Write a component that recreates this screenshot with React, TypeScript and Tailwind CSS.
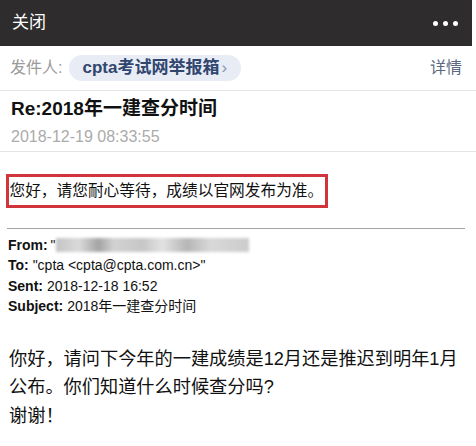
import React from "react";

const FONT = { fontFamily: '"Liberation Sans", "Noto Sans CJK SC", sans-serif' };

/* Header fields of the quoted message */
function QuoteLine({ label, children }: { label: string; children: React.ReactNode }) {
    return (
        <div className="leading-[20.4px] text-[14px] text-[#111] whitespace-nowrap">
            <span className="font-bold">{label}</span> {children}
        </div>
    );
}

export default function App() {
    return (
        <div className="w-[476px] h-[446px] bg-white overflow-hidden" style={FONT}>
            {/* Title bar */}
            <div className="h-[46px] w-[472px] bg-[#2e2c2d] flex items-center justify-between pl-[12px] pr-[14px]">
                <span className="text-white text-[17px]">关闭</span>
                <div className="flex gap-[5px]">
                    <span className="w-[5px] h-[5px] rounded-full bg-white" />
                    <span className="w-[5px] h-[5px] rounded-full bg-white" />
                    <span className="w-[5px] h-[5px] rounded-full bg-white" />
                </div>
            </div>

            {/* Sender row */}
            <div className="h-[45px] flex items-center justify-between pl-[10px] pr-[14px] border-b border-[#e4e4e4]">
                <div className="flex items-center">
                    <span className="text-[16px] text-[#9a9a9a]">发件人:</span>
                    <span className="ml-[7px] h-[26px] rounded-full bg-[#e8ecf4] text-[#30466f] text-[17px] font-semibold flex items-center pl-[13px] pr-[14px]">
                        cpta考试网举报箱
                        <span className="ml-[2px] text-[#8a97b0] font-normal">›</span>
                    </span>
                </div>
                <span className="text-[16px] text-[#5b6880]">详情</span>
            </div>

            {/* Subject + date */}
            <div className="pl-[11px] pt-[6px] pb-[4px] border-b border-[#e4e4e4]">
                <div className="text-[19px] leading-[24px] font-bold text-[#111]">Re:2018年一建查分时间</div>
                <div className="mt-[6px] text-[16px] leading-[20px] text-[#ababab]">2018-12-19 08:33:55</div>
            </div>

            {/* Reply, marked in red */}
            <div className="mt-[22px] ml-[6px] w-[322px] h-[34px] border-[3px] border-[#d2343b] flex items-center pl-[0.5px]">
                <span className="text-[15.7px] text-[#111] whitespace-nowrap">您好，请您耐心等待，成绩以官网发布为准。</span>
            </div>

            {/* Quoted original */}
            <div className="mt-[20px] ml-[7px] w-[458px] h-px bg-[#a3a3a3]" />
            <div className="pl-[8px] pt-[6px]">
                <QuoteLine label="From:">
                    <span className="-ml-[1px]">"</span>
                    <span className="inline-block align-middle w-[193px] h-[14px] -mt-[3px] blur-[1.5px] bg-[linear-gradient(90deg,#c4c4c4_0%,#dadada_12%,#a4a4a4_22%,#d2d2d2_30%,#c6c6c6_45%,#e2e2e2_55%,#b6b6b6_68%,#d8d8d8_80%,#cccccc_100%)]" />
                </QuoteLine>
                <QuoteLine label="To:">"cpta &lt;cpta@cpta.com.cn&gt;"</QuoteLine>
                <QuoteLine label="Sent:">2018-12-18 16:52</QuoteLine>
                <QuoteLine label="Subject:">2018年一建查分时间</QuoteLine>
            </div>

            <div className="mt-[28px] pl-[9px] text-[18.2px] leading-[28.5px] text-[#111] whitespace-nowrap">
                你好，请问下今年的一建成绩是12月还是推迟到明年1月
                <br />
                公布。你们知道什么时候查分吗?
                <br />
                谢谢！
            </div>
        </div>
    );
}
